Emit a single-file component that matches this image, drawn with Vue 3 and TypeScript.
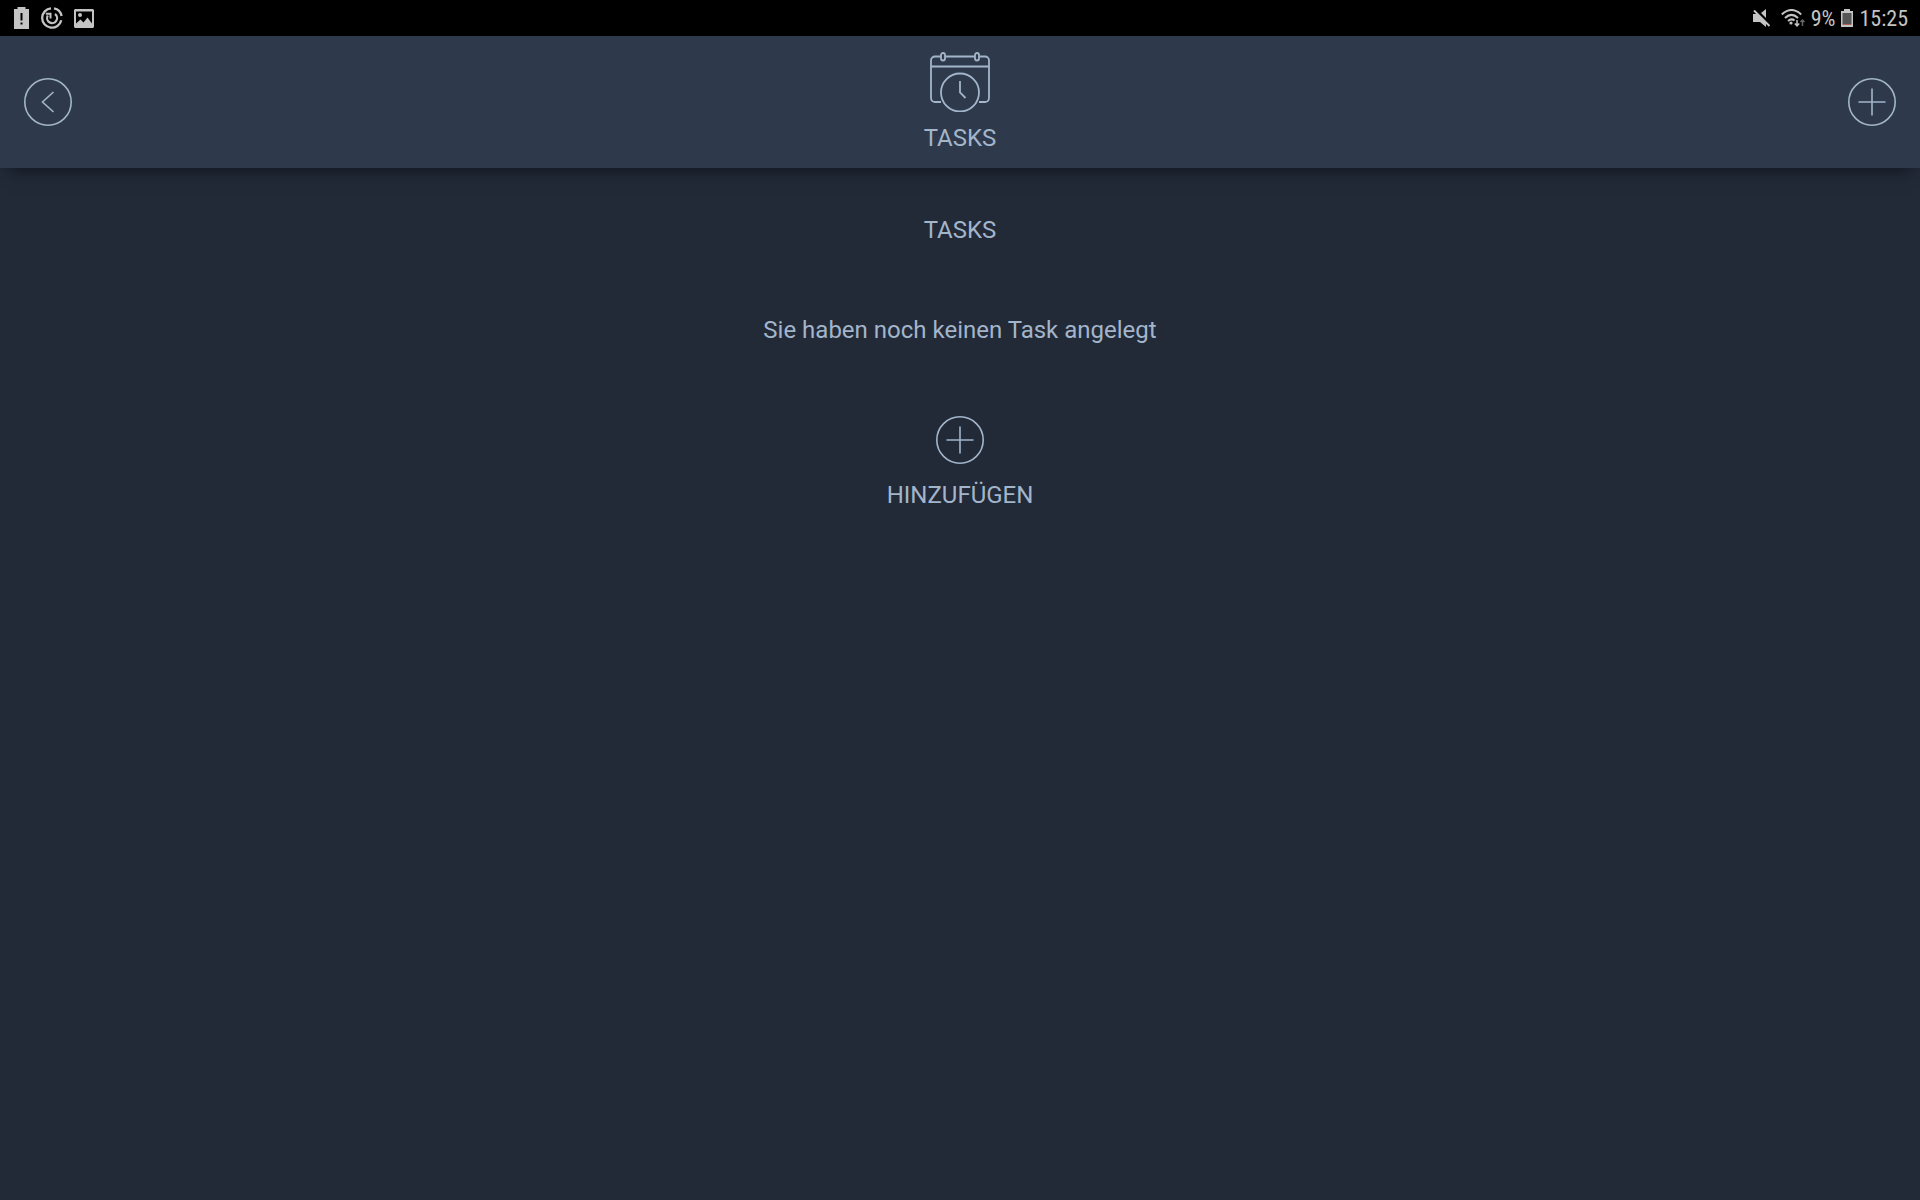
<script setup lang="ts">
const title = 'TASKS'
const emptyText = 'Sie haben noch keinen Task angelegt'
const addLabel = 'HINZUFÜGEN'
const battery = '9%'
const time = '15:25'
</script>

<template>
  <div class="screen">
    <div class="status">
      <div class="group notifications">
        <svg width="16" height="22" viewBox="0 0 16 22" aria-hidden="true">
          <path fill="#c4c4c4" fill-rule="evenodd" d="M3.500 0h8v2H15v20H0V2h3.500zM6.500 6v7.500h2V6zM6.500 15.500v2h2v-2z" />
        </svg>
        <svg width="22" height="22" viewBox="0 0 22 22" fill="none" stroke="#c4c4c4" aria-hidden="true">
          <path stroke-width="2.300" d="M13 1.400A9.700 9.700 0 0 1 20.600 9M20.300 13.200A9.700 9.700 0 1 1 10 1.300" />
          <path stroke-width="2.200" d="M14 7A5 5 0 1 1 6.800 8.500" />
          <path stroke-width="2" d="M4.800 6.800H9.500V11.500" />
        </svg>
        <svg width="21" height="19" viewBox="0 0 21 19" aria-hidden="true">
          <path fill="#c4c4c4" fill-rule="evenodd" d="M1 0h18L20 1v17L19 19H1L0 18V1zM2 2.500v12l4.500-4 3 3 4-5 4.500 6V2.500z" />
          <circle cx="6" cy="6" r="2" fill="#c4c4c4" />
        </svg>
      </div>
      <div class="group indicators">
        <svg width="18" height="18" viewBox="0 0 18 18" aria-hidden="true">
          <path fill="#c4c4c4" d="M0 5h4l9 9v4l-6-5H0zM8 4l5-4v9z" />
          <path stroke="#000" stroke-width="2" d="M2.500 .500L18 16" />
          <path stroke="#c4c4c4" stroke-width="2" d="M1 1.500L16.500 17" />
        </svg>
        <svg class="wifi" width="24" height="18" viewBox="0 0 24 18" fill="none" stroke="#c4c4c4" stroke-width="2" aria-hidden="true">
          <path d="M.800 5.500Q10.500-3.500 20.200 5.500M4 9Q10.500 2.700 17 9M7 12Q10.500 9 13.500 11.500" />
          <circle cx="10" cy="14" r="1.600" fill="#c4c4c4" stroke="none" />
          <path stroke-width="1.500" d="M16 11v6M13.800 14.500L16 16.800l2.200-2.300" />
          <path stroke="#666" stroke-width="1.500" d="M21.500 17v-6M19.500 13l2-2 2 2" />
        </svg>
        <span class="reading">{{ battery }}</span>
        <svg width="12" height="18" viewBox="0 0 12 18" aria-hidden="true">
          <path fill="#c4c4c4" d="M3 0h6v2h3v16H0V2h3z" />
          <path fill="#555" d="M1.500 4h9v11h-9z" />
          <path fill="#b0655c" d="M1.500 15h9v1h-9z" />
        </svg>
        <span class="reading">{{ time }}</span>
      </div>
    </div>

    <header class="header">
      <button class="round" type="button" aria-label="Zurück">
        <svg width="48" height="48" viewBox="0 0 48 48" aria-hidden="true">
          <circle cx="24" cy="24" r="23.200" />
          <path d="M29.500 14L18.500 24l11 10" />
        </svg>
      </button>
      <div class="heading">
        <svg class="calendar" width="60" height="60" viewBox="0 0 60 60" aria-hidden="true">
          <path d="M10.500 4.500H5a4 4 0 0 0-4 4V46a4 4 0 0 0 4 4h6M15.500 4.500h29M49.500 4.500H55a4 4 0 0 1 4 4V46a4 4 0 0 1-4 4h-6M1 14.500h58" />
          <rect x="11" y="1" width="4" height="7.500" rx="2" />
          <rect x="45" y="1" width="4" height="7.500" rx="2" />
          <circle cx="30" cy="40.500" r="19" />
          <path d="M30 29v11.500l5.500 5.500" />
        </svg>
        <h1>{{ title }}</h1>
      </div>
      <button class="round" type="button" aria-label="Neuer Task">
        <svg width="48" height="48" viewBox="0 0 48 48" aria-hidden="true">
          <circle cx="24" cy="24" r="23.200" />
          <path d="M10.500 24h27M24 10.500v27" />
        </svg>
      </button>
    </header>

    <main class="content">
      <h2>{{ title }}</h2>
      <p>{{ emptyText }}</p>
      <button class="add" type="button">
        <svg width="48" height="48" viewBox="0 0 48 48" aria-hidden="true">
          <circle cx="24" cy="24" r="23.200" />
          <path d="M10.500 24h27M24 10.500v27" />
        </svg>
        <span>{{ addLabel }}</span>
      </button>
    </main>
  </div>
</template>

<style>
body {
  margin: 0;
  background: #222a38;
}
</style>

<style scoped>
.screen {
  min-height: 100vh;
  background: #222a38;
  color: #a3b5ca;
  font-family: Roboto, sans-serif;
  font-size: 24px;
  line-height: 28px;
  overflow: hidden;
}

.status {
  display: flex;
  align-items: center;
  justify-content: space-between;
  height: 36px;
  padding: 0 12px 0 14px;
  background: #000;
  color: #c4c4c4;
  font-family: "Roboto Condensed", Roboto, sans-serif;
  font-size: 22px;
}

.group {
  display: flex;
  align-items: center;
}

.notifications {
  gap: 11px;
}

.indicators {
  gap: 6px;
}

.reading {
  padding-top: 2px;
}

.wifi {
  margin-left: 4px;
}

.header {
  display: flex;
  align-items: center;
  justify-content: space-between;
  padding: 16px 24px;
  background: #2e3a4b;
  box-shadow: 0 10px 16px -8px rgba(0, 0, 0, 0.5);
}

.heading {
  display: flex;
  flex-direction: column;
  align-items: center;
  gap: 12px;
}

h1,
h2,
p {
  margin: 0;
  font-size: 24px;
  font-weight: 400;
}

button {
  padding: 0;
  border: 0;
  background: none;
  color: inherit;
  font: inherit;
  cursor: pointer;
}

.round {
  display: flex;
}

.header svg,
.add svg {
  display: block;
  fill: none;
  stroke: #a3b5ca;
  stroke-width: 1.6;
}

.header .calendar {
  stroke-width: 1.8;
}

.content {
  display: flex;
  flex-direction: column;
  align-items: center;
  gap: 72px;
  padding: 48px 24px;
}

.add {
  display: flex;
  flex-direction: column;
  align-items: center;
  gap: 17px;
}
</style>
